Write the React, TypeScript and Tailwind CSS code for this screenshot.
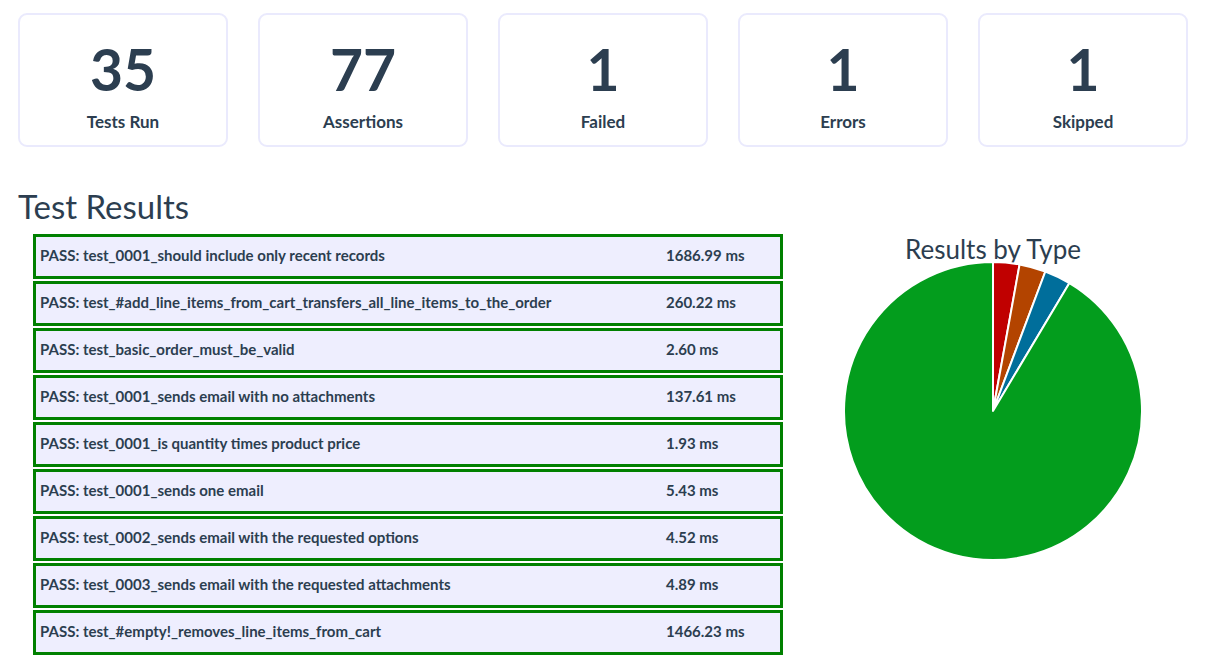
const stats = [
  { value: "35", label: "Tests Run" },
  { value: "77", label: "Assertions" },
  { value: "1", label: "Failed" },
  { value: "1", label: "Errors" },
  { value: "1", label: "Skipped" },
];

const results = [
  { name: "PASS: test_0001_should include only recent records", time: "1686.99 ms" },
  { name: "PASS: test_#add_line_items_from_cart_transfers_all_line_items_to_the_order", time: "260.22 ms" },
  { name: "PASS: test_basic_order_must_be_valid", time: "2.60 ms" },
  { name: "PASS: test_0001_sends email with no attachments", time: "137.61 ms" },
  { name: "PASS: test_0001_is quantity times product price", time: "1.93 ms" },
  { name: "PASS: test_0001_sends one email", time: "5.43 ms" },
  { name: "PASS: test_0002_sends email with the requested options", time: "4.52 ms" },
  { name: "PASS: test_0003_sends email with the requested attachments", time: "4.89 ms" },
  { name: "PASS: test_#empty!_removes_line_items_from_cart", time: "1466.23 ms" },
];

const slices = [
  { count: 1, color: "#c00000" },
  { count: 1, color: "#b34400" },
  { count: 1, color: "#006e9b" },
  { count: 32, color: "#039d1d" },
];

function PieChart() {
  const total = slices.reduce((s, x) => s + x.count, 0);
  const r = 149;
  const cx = 150;
  const cy = 150;
  let start = -Math.PI / 2;
  const pt = (a: number) => `${cx + r * Math.cos(a)} ${cy + r * Math.sin(a)}`;

  return (
    <svg width="300" height="300" viewBox="0 0 300 300">
      {slices.map((s, i) => {
        const end = start + (s.count / total) * Math.PI * 2;
        const large = end - start > Math.PI ? 1 : 0;
        const d = `M ${cx} ${cy} L ${pt(start)} A ${r} ${r} 0 ${large} 1 ${pt(end)} Z`;
        start = end;
        return <path key={i} d={d} fill={s.color} stroke="#ffffff" strokeWidth="2" strokeLinejoin="round" />;
      })}
    </svg>
  );
}

export default function App() {
  return (
    <div className="w-[1208px] h-[657px] overflow-hidden bg-white text-[#2c3e50]" style={{ fontFamily: "Lato, 'Open Sans', sans-serif" }}>
      {/* Summary cards */}
      <div className="flex gap-[30px] pl-[18px] pt-[13px]">
        {stats.map((s) => (
          <div
            key={s.label}
            className="w-[210px] h-[134px] border-2 border-[#eaeafd] rounded-[9px] flex flex-col items-center"
          >
            <div className="text-[57px] font-bold leading-none mt-[26px]">{s.value}</div>
            <div className="text-[17px] font-bold leading-none mt-[15px]">{s.label}</div>
          </div>
        ))}
      </div>

      <h2 className="text-[33px] leading-[38px] font-normal pl-[18px] mt-[40px]">Test Results</h2>

      <div className="flex mt-[9px]">
        {/* Results table */}
        <div className="ml-[33px] w-[750px] flex flex-col gap-[2px]">
          {results.map((r) => (
            <div
              key={r.name}
              className="h-[45px] border-[3px] border-[#008000] bg-[#eeeefe] flex items-center pb-[3px] text-[15px] font-bold"
            >
              <div className="flex-1 pl-[4px]">{r.name}</div>
              <div className="w-[114px]">{r.time}</div>
            </div>
          ))}
        </div>

        {/* Chart */}
        <div className="flex flex-col items-center ml-[60px] w-[300px]">
          <div className="text-[26px] leading-none mt-[2px]">Results by Type</div>
          <div className="-mt-[1px]">
            <PieChart />
          </div>
        </div>
      </div>
    </div>
  );
}
